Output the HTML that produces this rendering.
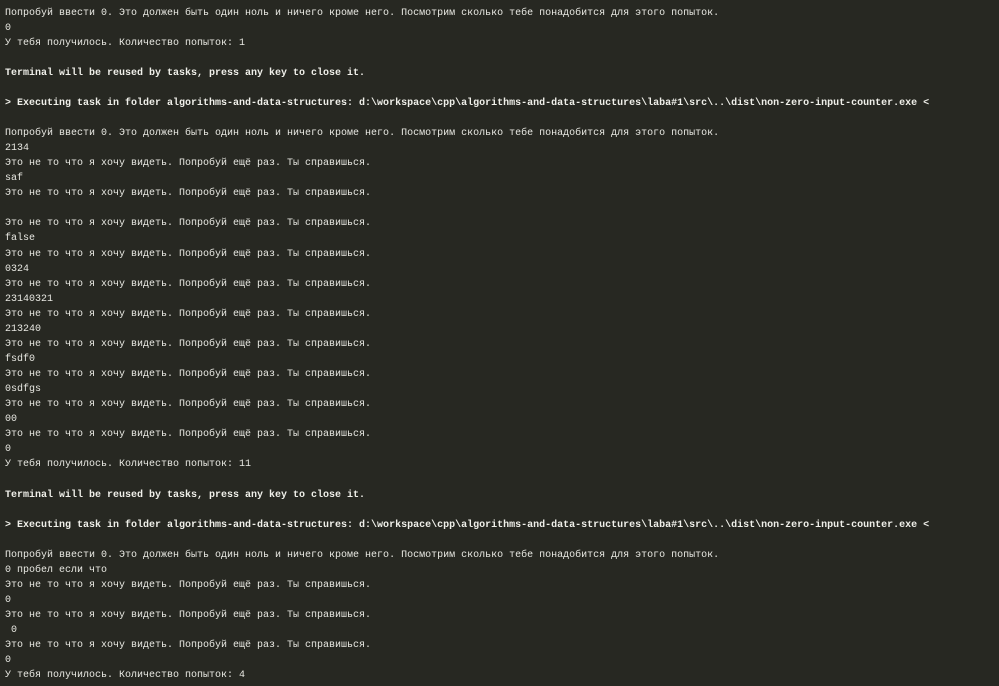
<!DOCTYPE html>
<html><head><meta charset="utf-8"><style>
html,body{margin:0;padding:0;background:#272822;width:999px;height:686px;overflow:hidden}
pre{margin:0;padding:5.5px 0 0 5px;font-family:"Liberation Mono","DejaVu Sans Mono",monospace;font-size:10px;line-height:15.07px;color:#e8e8e2;white-space:pre}
b{font-weight:bold;color:#f0f0ea}
</style></head><body><pre>Попробуй ввести 0. Это должен быть один ноль и ничего кроме него. Посмотрим сколько тебе понадобится для этого попыток.
0
У тебя получилось. Количество попыток: 1

<b>Terminal will be reused by tasks, press any key to close it.</b>

<b>&gt; Executing task in folder algorithms-and-data-structures: d:\workspace\cpp\algorithms-and-data-structures\laba#1\src\..\dist\non-zero-input-counter.exe &lt;</b>

Попробуй ввести 0. Это должен быть один ноль и ничего кроме него. Посмотрим сколько тебе понадобится для этого попыток.
2134
Это не то что я хочу видеть. Попробуй ещё раз. Ты справишься.
saf
Это не то что я хочу видеть. Попробуй ещё раз. Ты справишься.

Это не то что я хочу видеть. Попробуй ещё раз. Ты справишься.
false
Это не то что я хочу видеть. Попробуй ещё раз. Ты справишься.
0324
Это не то что я хочу видеть. Попробуй ещё раз. Ты справишься.
23140321
Это не то что я хочу видеть. Попробуй ещё раз. Ты справишься.
213240
Это не то что я хочу видеть. Попробуй ещё раз. Ты справишься.
fsdf0
Это не то что я хочу видеть. Попробуй ещё раз. Ты справишься.
0sdfgs
Это не то что я хочу видеть. Попробуй ещё раз. Ты справишься.
00
Это не то что я хочу видеть. Попробуй ещё раз. Ты справишься.
0
У тебя получилось. Количество попыток: 11

<b>Terminal will be reused by tasks, press any key to close it.</b>

<b>&gt; Executing task in folder algorithms-and-data-structures: d:\workspace\cpp\algorithms-and-data-structures\laba#1\src\..\dist\non-zero-input-counter.exe &lt;</b>

Попробуй ввести 0. Это должен быть один ноль и ничего кроме него. Посмотрим сколько тебе понадобится для этого попыток.
0 пробел если что
Это не то что я хочу видеть. Попробуй ещё раз. Ты справишься.
0
Это не то что я хочу видеть. Попробуй ещё раз. Ты справишься.
 0
Это не то что я хочу видеть. Попробуй ещё раз. Ты справишься.
0
У тебя получилось. Количество попыток: 4</pre></body></html>
